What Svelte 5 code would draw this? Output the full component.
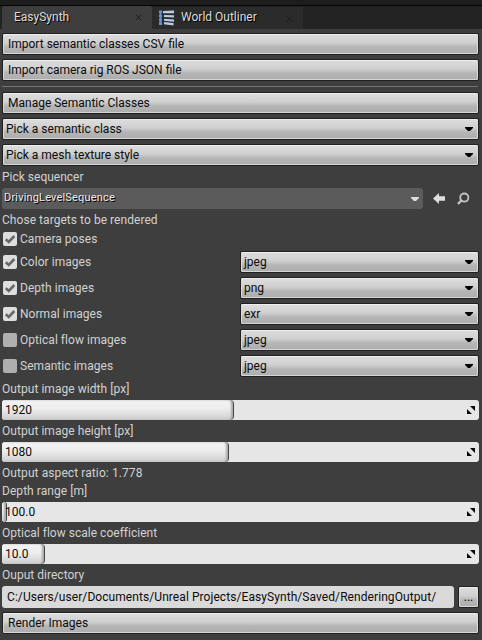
<script>
  const actions = ['Import semantic classes CSV file', 'Import camera rig ROS JSON file'];
  const pickers = ['Pick a semantic class', 'Pick a mesh texture style'];
  const targets = [
    { name: 'Color images', on: true, format: 'jpeg' },
    { name: 'Depth images', on: true, format: 'png' },
    { name: 'Normal images', on: true, format: 'exr' },
    { name: 'Optical flow images', on: false, format: 'jpeg' },
    { name: 'Semantic images', on: false, format: 'jpeg' }
  ];
  const sizes = [
    { label: 'Output image width [px]', value: '1920', fill: 232 },
    { label: 'Output image height [px]', value: '1080', fill: 227 }
  ];
  const ranges = [
    { label: 'Depth range [m]', value: '100.0', fill: 5 },
    { label: 'Optical flow scale coefficient', value: '10.0', fill: 43, tight: true }
  ];
</script>

{#snippet arrow()}
  <svg class="arrow" width="8" height="4" viewBox="0 0 8 4"><path d="M0 0h8v1L5 4H3L0 1z" fill="currentColor" /></svg>
{/snippet}

{#snippet check(on)}
  <span class="check" class:on>
    {#if on}
      <svg width="14" height="14" viewBox="0 0 14 14"><path d="M2.8 7.2 5.8 10 11.3 4" fill="none" stroke="#686868" stroke-width="2.6" /></svg>
    {/if}
  </span>
{/snippet}

{#snippet close()}
  <svg class="close" width="7" height="7" viewBox="0 0 7 7"><path d="M.7.7l5.6 5.6M6.3.7.7 6.3" stroke="#1c1c1c" stroke-width="1" /></svg>
{/snippet}

{#snippet spin(s)}
  <div class="label" class:tight={s.tight}>{s.label}</div>
  <div class="spin">
    <div class="fill" style="width: {s.fill}px"></div>
    <span class="value">{s.value}</span>
    <svg width="8" height="8" viewBox="0 0 8 8"><path d="M3 0h5v5zM0 3v5h5z" fill="#080808" /></svg>
  </div>
{/snippet}

<div class="window">
  <div class="titlebar"></div>
  <div class="tabs">
    <div class="tab active"><span>EasySynth</span>{@render close()}</div>
    <div class="tab">
      <svg class="outliner" width="16" height="16" viewBox="0 0 16 16">
        <path d="M1.5 1v13" stroke="#5b86d0" stroke-width="1" />
        <path d="M0 .5h3v3H0zM0 4.5h3v3H0zM0 8.5h3v3H0zM0 12h3v3H0z" fill="#6c91d6" />
        <path d="M4 1 15 .5v2.7L4 3.3zM5 5l10 .3v2.3L5 7zM5 8.7l10 .8v2.3l-10-1zM5 12l9.5 1v2.5L5 14.3z" fill="#bccbe5" />
      </svg>
      <span>World Outliner</span>{@render close()}
    </div>
  </div>
  <main>
    {#each actions as a}<button class="btn">{a}</button>{/each}
    <hr />
    <button class="btn">Manage Semantic Classes</button>
    {#each pickers as p}<button class="btn combo">{p}{@render arrow()}</button>{/each}

    <div class="label seq">Pick sequencer</div>
    <div class="asset">
      <div class="picker"><span>DrivingLevelSequence</span>{@render arrow()}</div>
      <svg width="12" height="11" viewBox="0 0 12 11"><path d="M0 5.5 6 0v3.2h6v4.6H6V11z" fill="#dedede" /></svg>
      <svg class="lens" width="13" height="13" viewBox="0 0 13 13"><circle cx="7.3" cy="5.6" r="4.1" fill="none" stroke="#c4c4c4" stroke-width="1.8" /><path d="M4.5 8.4.9 12" stroke="#c4c4c4" stroke-width="2.2" /></svg>
    </div>

    <div class="label chose">Chose targets to be rendered</div>
    <div class="target poses">{@render check(true)}<span class="name">Camera poses</span></div>
    {#each targets as t}
      <div class="target">
        {@render check(t.on)}<span class="name">{t.name}</span>
        <button class="btn combo">{t.format}{@render arrow()}</button>
      </div>
    {/each}

    <div class="values">
      {#each sizes as s}{@render spin(s)}{/each}
      <div class="label ratio">Output aspect ratio: 1.778</div>
      {#each ranges as s}{@render spin(s)}{/each}
    </div>

    <div class="label tight">Ouput directory</div>
    <div class="dir"><div class="path">C:/Users/user/Documents/Unreal Projects/EasySynth/Saved/RenderingOutput/</div><button class="btn more">...</button></div>
    <button class="btn">Render Images</button>
  </main>
</div>

<style>
  :global(body) { background: #3e3e3e; }
  .window {
    width: 482px; height: 640px; overflow: hidden; background: #3e3e3e;
    display: flex; flex-direction: column; color: #d2d2d2;
    font: 12px/18px Roboto, sans-serif; white-space: nowrap;
  }
  svg { flex: none; display: block; }
  .titlebar { flex: none; height: 5px; background: #1d1d1d; border-bottom: 1px solid #050505; }
  .tabs { flex: none; height: 23px; display: flex; background: #232323; padding-left: 2px; }
  .tab {
    box-sizing: border-box; width: 151px; height: 22px; margin-top: 1px; padding: 0 10px 0 12px;
    display: flex; align-items: center; background: #2b2b2b; border-radius: 2px 2px 0 0;
    color: #dcdcdc; text-shadow: 1px 1px 0 #000;
  }
  .tab.active { width: 150px; height: 23px; margin-top: 0; background: #3e3e3e; }
  .tab:not(.active) { padding-left: 7px; }
  .tab span { position: relative; top: -1px; }
  .outliner { margin-right: 6px; }
  .close { margin-left: auto; }
  main { flex: none; display: flex; flex-direction: column; padding: 4px 3px 0 2px; }
  .btn {
    box-sizing: border-box; flex: none; height: 22px; margin: 0 0 4px; padding: 0 5px;
    display: flex; align-items: center; text-align: left; color: #0b0b0b; font: inherit;
    border: 1px solid #202020; border-radius: 2px;
    background: linear-gradient(#dedede, #cfcfcf 45%, #b5b5b5 65%, #adadad);
    box-shadow: inset 0 1px #ededed, inset 0 -1px #d6d6d6, inset 1px 0 #dadada, inset -1px 0 #dadada;
  }
  .combo { padding: 0 5px 0 3px; }
  .arrow { margin-left: auto; color: #000; }
  hr { width: 476px; height: 1px; border: 0; margin: 1px 0 5px; background: #747474; }
  .label { height: 21px; line-height: 21px; letter-spacing: 0.05px; }
  .seq { height: 18px; line-height: 14px; letter-spacing: 0; }
  .asset { display: flex; align-items: center; height: 21px; }
  .picker {
    box-sizing: border-box; width: 421px; height: 21px; padding: 0 4px 0 2px; margin-right: 10px;
    display: flex; align-items: center; border-radius: 3px; background: #5b5b5b;
    font-size: 11px; letter-spacing: 0.17px; color: #ededed; text-shadow: 1px 1px 0 #000;
  }
  .picker span { margin-bottom: 2px; }
  .picker .arrow { color: #dedede; }
  .lens { margin-left: 12px; }
  .chose { height: 21px; line-height: 23px; }
  .target { height: 22px; margin-bottom: 4px; display: flex; align-items: center; padding-left: 1px; }
  .poses { height: 18px; margin-bottom: 3px; }
  .target .btn { width: 239px; margin: 0 0 0 auto; }
  .check { width: 14px; height: 14px; border-radius: 2px; background: #afafaf; }
  .check.on { background: #dedede; }
  .name { margin-left: 3px; letter-spacing: 0.04px; }
  .values { margin-top: -2px; }
  .ratio { height: 18px; line-height: 21px; letter-spacing: 0.09px; }
  .tight { letter-spacing: 0.02px; }
  .spin {
    position: relative; height: 20px; margin: 0 0 1px; padding: 0 4px 0 3px; width: 470px;
    display: flex; align-items: center; justify-content: space-between;
    background: #e6e6e6; border-radius: 3px; overflow: hidden; color: #0b0b0b;
  }
  .fill {
    position: absolute; box-sizing: border-box; left: 0; top: 0; bottom: 0;
    border-right: 1px solid #444; border-radius: 2px 4px 4px 2px;
    background: linear-gradient(#f3f3f3, #ededed 45%, #cdcdcd);
    box-shadow: inset -2px 0 2px #aaa;
  }
  .value { position: relative; }
  .dir { display: flex; justify-content: space-between; height: 22px; margin-bottom: 4px; }
  .path { box-sizing: border-box; width: 452px; height: 22px; line-height: 22px; padding-left: 5px; border-radius: 3px; background: #dadada; color: #0b0b0b; letter-spacing: 0.07px; }
  .more { width: 21px; padding: 0; justify-content: center; }
</style>
